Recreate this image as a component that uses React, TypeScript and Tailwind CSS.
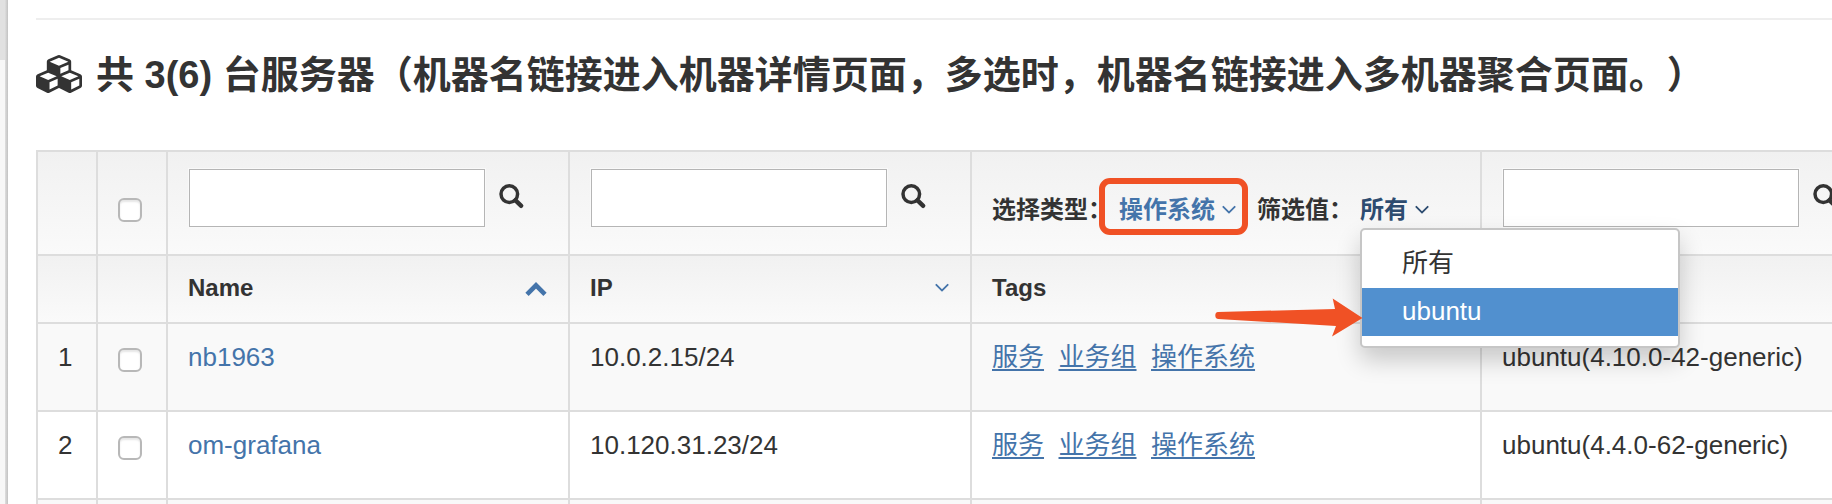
import type { ReactNode } from "react";

const ROW =
  "grid grid-cols-[60px_70px_402px_402px_510px_500px] shrink-0 border-t-2 border-[#dddddd]";
const CELL = "border-l-2 border-[#dddddd]";

function AngleDown({ className }: { className: string }) {
  return (
    <svg viewBox="0 0 1792 1792" className={`size-6 shrink-0 fill-current ${className}`}>
      <path d="M1395 736q0 13-10 23l-466 466q-10 10-23 10t-23-10l-466-466q-10-10-10-23t10-23l50-50q10-10 23-10t23 10l393 393 393-393q10-10 23-10t23 10l50 50q10 10 10 23z" />
    </svg>
  );
}

function ChevronUp({ className }: { className: string }) {
  return (
    <svg viewBox="0 0 24 16" className={`h-4 w-6 shrink-0 fill-none stroke-current ${className}`}>
      <path d="M3 13.300 L12 4.300 L21 13.300" strokeWidth="4.6" strokeLinejoin="miter" />
    </svg>
  );
}

function Search({ className }: { className: string }) {
  return (
    <svg viewBox="0 0 26 26" className={`size-[26px] shrink-0 fill-none stroke-current ${className}`}>
      <circle cx="10.3" cy="11.1" r="8.3" strokeWidth="3.5" />
      <path d="M16.500 17.300 L22.200 22.800" strokeWidth="4.4" strokeLinecap="round" />
    </svg>
  );
}

function Cubes({ className }: { className: string }) {
  return (
    <svg viewBox="0 0 2176 1792" className={`h-[38px] w-[46px] shrink-0 fill-current ${className}`}>
      <path d="M640 1632l384-192v-314l-384 164v342zm-64-454l404-173-404-173-404 173zm1088 454l384-192v-314l-384 164v342zm-64-454l404-173-404-173-404 173zm-448-293l384-165v-266l-384 164v267zm-64-379l441-189-441-189-441 189zm1088 518v416q0 36-19 67t-52 47l-448 224q-25 14-57 14t-57-14l-448-224q-4-2-7-4-2 2-7 4l-448 224q-25 14-57 14t-57-14l-448-224q-33-16-52-47t-19-67v-416q0-38 21.5-70t56.5-48l434-186v-400q0-38 21.5-70t56.5-48l448-192q23-10 50-10t50 10l448 192q35 16 56.5 48t21.5 70v400l434 186q36 16 57 48t21 70z" />
    </svg>
  );
}

function Checkbox({ className }: { className: string }) {
  return (
    <div className={`${CELL} pl-5`}>
      <input
        type="checkbox"
        className={`block size-6 appearance-none rounded-[6px] border-2 border-[#b8b8b8] bg-white shadow-[inset_0_2px_2px_rgba(0,0,0,0.1)] ${className}`}
      />
    </div>
  );
}

function SearchCell() {
  return (
    <div className={`${CELL} flex items-start pt-[17px] pl-[21px]`}>
      <input
        type="text"
        className="h-[58px] w-[296px] shrink-0 border border-[#b5b5b5] bg-white shadow-[0_0_0_1px_#f9f9f9]"
      />
      <Search className="mt-[14px] ml-[14px]" />
    </div>
  );
}

function HeadCell({ children }: { children?: ReactNode }) {
  return (
    <div className={`${CELL} flex items-start pt-[14px] pl-5 text-[24px] leading-[36px] font-bold`}>
      {children}
    </div>
  );
}

function ServerRow({
  index,
  name,
  ip,
  system,
  striped,
}: {
  index: number;
  name: string;
  ip: string;
  system: string;
  striped?: boolean;
}) {
  const cell = `${CELL} pt-[15px] pl-5`;
  return (
    <div className={`${ROW} h-[88px] text-[26px] leading-[36px] ${striped ? "bg-[#f9f9f9]" : "bg-white"}`}>
      <div className={cell}>{index}</div>
      <Checkbox className="mt-6" />
      <div className={cell}>
        <a className="text-[#4474aa]">{name}</a>
      </div>
      <div className={cell}>{ip}</div>
      <div className={`${cell} flex gap-[14.5px] text-[#4474aa]`}>
        {["服务", "业务组", "操作系统"].map((tag) => (
          <a key={tag} className="underline decoration-2 underline-offset-[3px]">
            {tag}
          </a>
        ))}
      </div>
      <div className={cell}>{system}</div>
    </div>
  );
}

export default function App() {
  return (
    <div className="relative flex h-[504px] w-[1832px] overflow-hidden bg-white font-['Liberation_Sans','Noto_Sans_CJK_SC',sans-serif] text-[#333333] [text-spacing-trim:space-all]">
      <aside className="flex w-2 shrink-0 bg-[#f7f7f7]">
        <div className="h-[60px] flex-1 bg-[#e1e1e1]" />
        <div className="w-[3px] bg-gradient-to-r from-[#dedede] to-[#c2c2c2]" />
      </aside>

      <main className="flex min-w-0 flex-1 flex-col overflow-hidden pl-7">
        <div className="mt-[18px] h-[2px] shrink-0 bg-[#eeeeee]" />

        <h1 className="flex h-[130px] shrink-0 items-start pt-[30px] text-[38px] leading-[50px] font-bold whitespace-nowrap">
          <Cubes className="mt-[5px] mr-[14px]" />
          <span>共 3(6) 台服务器（机器名链接进入机器详情页面，多选时，机器名链接进入多机器聚合页面。）</span>
        </h1>

        <div className="flex flex-col">
          <div className={`${ROW} h-[104px] bg-gradient-to-b from-[#f1f1f1] to-[#fafafa]`}>
            <div className={CELL} />
            <Checkbox className="mt-[46px]" />
            <SearchCell />
            <SearchCell />
            <div className={`${CELL} flex items-start pt-10 pl-5 text-[24px] leading-[36px] font-bold whitespace-nowrap`}>
              <span className="w-[127px]">选择类型：</span>
              <a className="flex w-[138px] text-[#4474aa]">
                操作系统
                <AngleDown className="mt-[5px] ml-[2px]" />
              </a>
              <span className="w-[103px]">筛选值：</span>
              <a className="flex text-[#2d4c70]">
                所有
                <AngleDown className="mt-[5px] ml-[2px]" />
              </a>
            </div>
            <SearchCell />
          </div>

          <div className={`${ROW} h-[68px] bg-gradient-to-b from-[#f1f1f1] to-[#fafafa]`}>
            <HeadCell />
            <HeadCell />
            <HeadCell>
              Name
              <ChevronUp className="mt-[11px] mr-5 ml-auto text-[#4474aa]" />
            </HeadCell>
            <HeadCell>
              IP
              <AngleDown className="mt-[5px] mr-4 ml-auto text-[#4474aa]" />
            </HeadCell>
            <HeadCell>Tags</HeadCell>
            <HeadCell />
          </div>

          <ServerRow index={1} name="nb1963" ip="10.0.2.15/24" system="ubuntu(4.10.0-42-generic)" striped />
          <ServerRow index={2} name="om-grafana" ip="10.120.31.23/24" system="ubuntu(4.4.0-62-generic)" />

          <div className={`${ROW} h-[88px] bg-[#f9f9f9]`}>
            <div className={CELL} />
            <div className={CELL} />
            <div className={CELL} />
            <div className={CELL} />
            <div className={CELL} />
            <div className={CELL} />
          </div>
        </div>
      </main>

      {/* Filter value menu */}
      <ul className="absolute top-[228px] left-[1360px] w-[320px] rounded-[5px] border-2 border-[#c6c6c6] bg-white py-[10px] text-[26px] leading-[46px] shadow-[0_12px_24px_rgba(0,0,0,0.2)]">
        <li className="h-12 pl-10">所有</li>
        <li className="h-12 bg-[#5190cf] pl-10 text-white">ubuntu</li>
      </ul>

      {/* Callout annotations */}
      <div className="absolute top-[178px] left-[1099px] h-[57px] w-[149px] rounded-[11px] border-[6px] border-[#f05125]" />
      <svg viewBox="0 0 150 42" className="absolute top-[297px] left-[1214px] h-[42px] w-[150px] fill-[#f05125]">
        <path d="M4 15 L121 12 L118.7 1.5 L148.5 21 L118 39.5 L122 29 L4 22 Q1.300 21.500 1.300 18.500 Q1.300 15.200 4 15 Z" />
      </svg>
    </div>
  );
}
